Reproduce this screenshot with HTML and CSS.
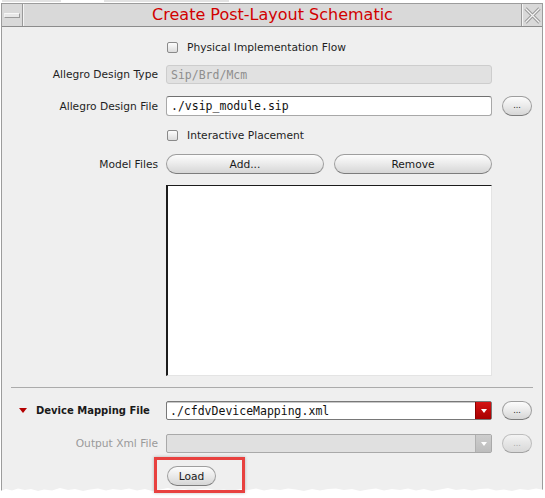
FILE: index.html
```html
<!DOCTYPE html>
<html>
<head>
<meta charset="utf-8">
<link rel="stylesheet" href="styles.css">
</head>
<body>
<div class="topstrip"><span class="seg seg-a"></span><span class="seg seg-b"></span></div>
<div class="window">
  <div class="titlebar">
    <div class="tb-btn tb-min"><span class="min-icon"></span></div>
    <div class="title">Create Post-Layout Schematic</div>
    <div class="tb-btn tb-close">
      <svg width="17" height="17" viewBox="0 0 17 17">
        <path d="M1.5 1.5 L15.5 15.5 M15.5 1.5 L1.5 15.5" stroke="#9a9a9a" stroke-width="3.2" fill="none"/>
        <path d="M1.5 1.5 L15.5 15.5 M15.5 1.5 L1.5 15.5" stroke="#f4f4f4" stroke-width="1.2" fill="none"/>
      </svg>
    </div>
  </div>
  <div class="content">
    <div class="row r1">
      <div class="label"></div>
      <div class="check"><span class="box"></span><span>Physical Implementation Flow</span></div>
    </div>
    <div class="row r2">
      <div class="label">Allegro Design Type</div>
      <div class="field field-disabled mono">Sip/Brd/Mcm</div>
    </div>
    <div class="row r3">
      <div class="label">Allegro Design File</div>
      <div class="field mono">./vsip_module.sip</div>
      <div class="btn btn-dots">...</div>
    </div>
    <div class="row r4">
      <div class="label"></div>
      <div class="check"><span class="box"></span><span>Interactive Placement</span></div>
    </div>
    <div class="row r5">
      <div class="label">Model Files</div>
      <div class="btn-pair">
        <div class="btn">Add...</div>
        <div class="btn">Remove</div>
      </div>
    </div>
    <div class="row r6">
      <div class="label"></div>
      <div class="listbox"></div>
    </div>
    <div class="separator"></div>
    <div class="row r7">
      <div class="label label-section"><span class="tri"></span><span>Device Mapping File</span></div>
      <div class="combo">
        <span class="combo-text mono">./cfdvDeviceMapping.xml</span>
        <span class="combo-btn"><span class="combo-arrow"></span></span>
      </div>
      <div class="btn btn-dots">...</div>
    </div>
    <div class="row r8">
      <div class="label label-disabled">Output Xml File</div>
      <div class="combo combo-disabled">
        <span class="combo-text mono"></span>
        <span class="combo-btn"><span class="combo-arrow"></span></span>
      </div>
      <div class="btn btn-dots btn-disabled">...</div>
    </div>
    <div class="row r9">
      <div class="label"></div>
      <div class="load-wrap">
        <div class="btn btn-load">Load</div>
        <div class="highlight"></div>
      </div>
    </div>
  </div>
</div>
<svg class="tear" width="545" height="14" viewBox="0 0 545 14" preserveAspectRatio="none">
  <path d="M0 5 L6 3 L12 4.5 L18 2.5 L25 4 L31 3 L38 5 L44 3.5 L52 4.5 L60 2 L68 4 L75 3 L83 5 L90 3.5 L98 2.5 L106 4.5 L113 3 L121 4 L129 2.5 L137 4.5 L145 3 L152 5 L160 3.5 L168 2 L176 4 L184 3 L192 4.5 L200 3 L208 2.5 L216 4.5 L224 3.5 L232 5 L240 3 L248 4 L256 2.5 L264 4.5 L272 3 L280 4 L288 2.5 L296 3.5 L304 5 L312 3 L320 4.5 L328 3 L336 2.5 L344 4 L352 3 L360 5 L368 3.5 L376 2.5 L384 4.5 L392 3 L400 4 L408 2.5 L416 4.5 L424 3 L432 5 L440 3.5 L448 2 L456 4 L464 3 L472 4.5 L480 3 L488 2.5 L496 4.5 L504 3.5 L512 5 L520 3 L528 4 L536 2.5 L545 4 L545 14 L0 14 Z" fill="#ffffff"/>
</svg>
</body>
</html>
```
FILE: styles.css
```css
html, body {
  margin: 0;
  padding: 0;
  background: #ffffff;
}
body {
  width: 545px;
  height: 498px;
  overflow: hidden;
  position: relative;
  font-family: "DejaVu Sans", sans-serif;
  font-size: 8pt;
  color: #1e1e1e;
}
.topstrip {
  height: 3px;
  display: flex;
}
.seg {
  height: 2px;
  background: #e2e2e2;
}
.seg-a { width: 59px; margin-left: 2px; }
.seg-b { width: 125px; margin-left: 43px; }

.window {
  margin-left: 1px;
  width: 540px;
  height: 494px;
  border: 1px solid #9c9c9c;
  border-bottom: none;
  background: #efefef;
}
.titlebar {
  height: 22px;
  display: flex;
  background: #d9d9d9;
  border-bottom: 1px solid #8c8c8c;
}
.tb-btn {
  width: 20px;
  display: flex;
  align-items: center;
  justify-content: center;
  background: #d9d9d9;
}
.tb-min {
  border-right: 1px solid #9a9a9a;
  box-shadow: 1px 0 0 #f4f4f4;
  margin-right: 1px;
}
.min-icon {
  width: 14px;
  height: 3px;
  background: #e8e8e8;
  border: 1px solid #9a9a9a;
  border-top-color: #f8f8f8;
  border-left-color: #f0f0f0;
}
.tb-close {
  border-left: 1px solid #9a9a9a;
  box-shadow: inset 1px 0 0 #f4f4f4;
  width: 20px;
}
.title {
  flex: 1;
  text-align: center;
  font-size: 16px;
  line-height: 22px;
  color: #d10000;
}

.content {
  display: flex;
  flex-direction: column;
}
.row {
  display: flex;
  align-items: center;
}
.label {
  width: 156px;
  margin-right: 8px;
  text-align: right;
  flex: none;
}
.label-disabled { color: #9a9a9a; }
.label-section {
  text-align: left;
  display: flex;
  align-items: center;
  padding-left: 17px;
  box-sizing: border-box;
  font-weight: bold;
  font-size: 10px;
  color: #1a1a1a;
}
.tri {
  width: 0;
  height: 0;
  border-left: 4px solid transparent;
  border-right: 4px solid transparent;
  border-top: 5px solid #b40000;
  margin-right: 9px;
}
.r1 { margin-top: 10px; height: 20px; }
.r2 { margin-top: 8px; height: 19px; }
.r3 { margin-top: 12px; height: 20px; }
.r4 { margin-top: 9px; height: 20px; }
.r5 { margin-top: 9px; height: 20px; }
.r6 { margin-top: 11px; height: 191px; align-items: stretch; }
.r7 { margin-top: 13px; height: 19px; }
.r8 { margin-top: 14px; height: 19px; }
.r9 { margin-top: 13px; height: 20px; }

.check {
  display: flex;
  align-items: center;
  margin-left: 1px;
}
.box {
  width: 9px;
  height: 9px;
  border: 1px solid #8a8a8a;
  border-radius: 2px;
  background: linear-gradient(#fdfdfd, #dcdcdc);
  margin-right: 9px;
}

.mono {
  font-family: "DejaVu Sans Mono", monospace;
  font-size: 11.5px;
}
.field {
  width: 326px;
  height: 100%;
  box-sizing: border-box;
  border: 1px solid #a8a8a8;
  border-top-color: #707070;
  border-radius: 3px;
  background: #ffffff;
  display: flex;
  align-items: center;
  padding-left: 4px;
  color: #111;
}
.field-disabled {
  background: #e1e1e1;
  border-color: #cdcdcd;
  color: #8e8e8e;
}

.btn {
  box-sizing: border-box;
  height: 100%;
  border: 1px solid #9e9e9e;
  border-bottom-color: #7c7c7c;
  border-radius: 10px;
  background: linear-gradient(#fcfcfc 0%, #ececec 45%, #d6d6d6 100%);
  display: flex;
  align-items: center;
  justify-content: center;
  color: #1a1a1a;
}
.btn-dots {
  width: 30px;
  margin-left: 10px;
  font-size: 8px;
  padding-bottom: 1px;
}
.btn-disabled {
  color: #a8a8a8;
  border-color: #bdbdbd;
  border-bottom-color: #a2a2a2;
  background: linear-gradient(#f4f4f4, #e6e6e6 45%, #d8d8d8);
}
.btn-pair {
  width: 326px;
  height: 100%;
  display: flex;
  gap: 10px;
}
.btn-pair .btn { flex: 1; }

.listbox {
  width: 326px;
  box-sizing: border-box;
  background: #ffffff;
  border-top: 1px solid #1c1c1c;
  border-left: 2px solid #1c1c1c;
  border-right: 1px solid #e4e4e4;
  border-bottom: 1px solid #e4e4e4;
}

.separator {
  margin-top: 11px;
  margin-left: 9px;
  width: 522px;
  height: 1px;
  background: #ababab;
}

.combo {
  width: 326px;
  height: 100%;
  box-sizing: border-box;
  border: 1px solid #787878;
  border-radius: 2px;
  background: #ffffff;
  display: flex;
  align-items: stretch;
  box-shadow: inset 0 1px 0 #c8c8c8;
}
.combo-text {
  flex: 1;
  display: flex;
  align-items: center;
  padding-left: 3px;
  color: #111;
}
.combo-btn {
  width: 15px;
  background: linear-gradient(#d41414, #a80000);
  display: flex;
  align-items: center;
  justify-content: center;
  border-left: 1px solid #8a0000;
}
.combo-arrow {
  width: 0;
  height: 0;
  border-left: 3px solid transparent;
  border-right: 3px solid transparent;
  border-top: 4px solid #ffffff;
}
.combo-disabled {
  background: #e0e0e0;
  border-color: #a9a9a9;
  box-shadow: none;
}
.combo-disabled .combo-btn {
  background: linear-gradient(#cdcdcd, #bdbdbd);
  border-left-color: #b0b0b0;
}

.load-wrap {
  position: relative;
  height: 100%;
  margin-left: 1px;
}
.btn-load {
  width: 49px;
}
.highlight {
  position: absolute;
  left: -13px;
  top: -9px;
  width: 85px;
  height: 30px;
  border: 3px solid #e8413f;
  box-shadow: 0 0 3px rgba(0,0,0,0.25);
  z-index: 3;
}

.tear {
  position: absolute;
  left: 0;
  top: 486px;
  z-index: 2;
}
```
